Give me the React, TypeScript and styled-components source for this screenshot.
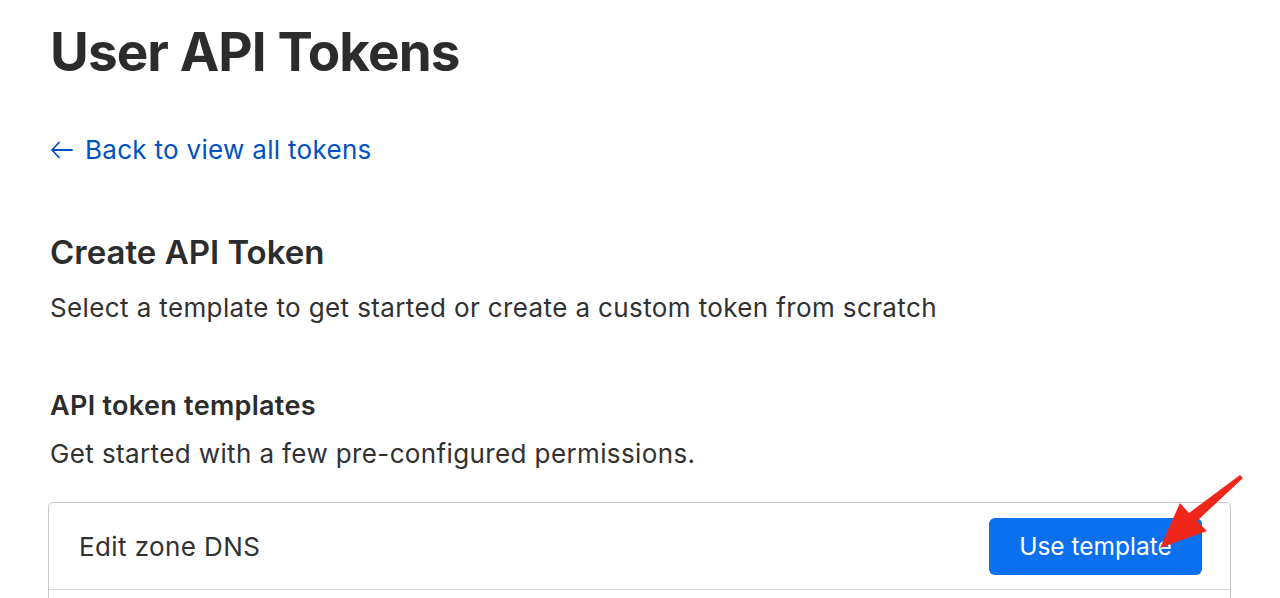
import React from "react";
import styled, { createGlobalStyle } from "styled-components";

const Global = createGlobalStyle`
  html, body { margin: 0; padding: 0; background: #fff; }
  body { font-family: Inter, "Liberation Sans", Arial, sans-serif; color: #313131; }
  * { box-sizing: border-box; }
`;

const Page = styled.div`
  position: relative;
  width: 1280px;
  height: 598px;
  overflow: hidden;
  padding: 20px 48px 0 50px;
`;

const Title = styled.h1`
  margin: 0;
  font-size: 53px;
  font-weight: 700;
  line-height: 64px;
  letter-spacing: -0.9px;
  color: #2c2c2c;
`;

const BackLink = styled.a`
  display: flex;
  align-items: center;
  gap: 11px;
  margin-top: 50px;
  font-size: 26px;
  line-height: 32px;
  letter-spacing: 0.3px;
  color: #0051c3;
  text-decoration: none;
`;

const SectionTitle = styled.h2`
  margin: 66px 0 0;
  font-size: 33px;
  font-weight: 600;
  line-height: 40px;
  color: #2c2c2c;
`;

const Text = styled.p<{ $top: number }>`
  margin: ${(p) => p.$top}px 0 0;
  font-size: 26px;
  line-height: 32px;
  letter-spacing: 0.38px;
  color: #313131;
`;

const SubTitle = styled.h3`
  margin: 66px 0 0;
  font-size: 27px;
  font-weight: 600;
  line-height: 32px;
  letter-spacing: 0.3px;
  color: #2c2c2c;
`;

const Card = styled.div`
  margin-top: 32px;
  margin-left: -2px;
  border: 1.5px solid #c8c8c8;
  border-radius: 5px;
  width: 1183px;
`;

const Row = styled.div`
  display: flex;
  align-items: center;
  justify-content: space-between;
  height: 87px;
  padding: 0 28px 0 30px;
  border-bottom: 1.5px solid #d6d6d6;
`;

const RowLabel = styled.span`
  font-size: 26px;
  letter-spacing: 0.4px;
  color: #313131;
`;

const Button = styled.button`
  height: 57px;
  width: 213px;
  border: none;
  border-radius: 6px;
  background: #0b70f0;
  color: #fff;
  font-family: inherit;
  font-size: 24.5px;
  font-weight: 400;
  letter-spacing: 0;
  cursor: pointer;
`;

const Arrow = styled.svg`
  position: absolute;
  left: 1150px;
  top: 465px;
`;

export default function App() {
  return (
    <>
      <Global />
      <Page>
        <Title>User API Tokens</Title>
        <BackLink href="#">
          <svg width="24" height="20" viewBox="0 0 24 20" fill="none" stroke="#0051c3" strokeWidth="1.8" strokeLinecap="round" strokeLinejoin="round">
            <path d="M22 10H2M9 2.5L2 10l7 7.5" />
          </svg>
          Back to view all tokens
        </BackLink>
        <SectionTitle>Create API Token</SectionTitle>
        <Text $top={20}>Select a template to get started or create a custom token from scratch</Text>
        <SubTitle>API token templates</SubTitle>
        <Text $top={16}>Get started with a few pre-configured permissions.</Text>
        <Card>
          <Row>
            <RowLabel>Edit zone DNS</RowLabel>
            <Button>Use template</Button>
          </Row>
          <Row />
        </Card>
        <Arrow width="100" height="95" viewBox="0 0 100 95">
          <path d="M90 10 L93 13 L47 56 L57 66 L10 83 L30 38 L39 48 Z" fill="#f0261b" />
        </Arrow>
      </Page>
    </>
  );
}
